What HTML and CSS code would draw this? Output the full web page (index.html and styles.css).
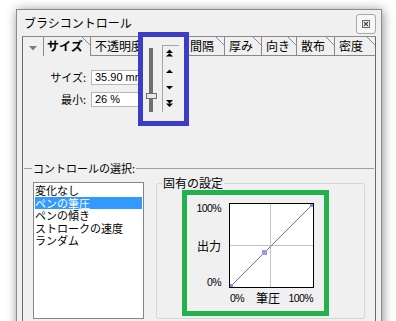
FILE: index.html
```html
<!DOCTYPE html>
<html lang="ja">
<head>
<meta charset="utf-8">
<title>ブラシコントロール</title>
<link rel="stylesheet" href="styles.css">
</head>
<body>
<div class="window">
  <div class="titlebar">
    <span class="title">ブラシコントロール</span>
    <button class="close" aria-label="閉じる">
      <svg width="8" height="8" viewBox="0 0 8 8"><rect x="0.5" y="0.5" width="7" height="7" fill="none" stroke="#6a6a6a"/><path d="M2 2L6 6M6 2L2 6" stroke="#4a4a4a" stroke-width="1.2"/></svg>
    </button>
  </div>
  <div class="panel">
    <div class="tabs">
      <div class="tab tab-menu"><svg class="menu-arrow" width="8" height="5" viewBox="0 0 8 5"><path d="M0 0H8L4 4.5Z" fill="#7c7c7c"/></svg></div>
      <div class="tab tab-active w-size">サイズ</div>
      <div class="tab w-opacity">不透明度</div>
      <div class="tab w-interval">間隔</div>
      <div class="tab w-thick">厚み</div>
      <div class="tab w-dir">向き</div>
      <div class="tab w-scatter">散布</div>
      <div class="tab tab-last w-density">密度</div>
    </div>
    <div class="body">
      <div class="fields">
        <div class="field"><span class="label">サイズ:</span><div class="input">35.90 mm</div></div>
        <div class="field"><span class="label">最小:</span><div class="input">26 %</div></div>
      </div>
      <fieldset class="ctrl">
        <legend>コントロールの選択:</legend>
        <div class="ctrl-row">
          <ul class="list">
            <li>変化なし</li>
            <li class="sel">ペンの筆圧</li>
            <li>ペンの傾き</li>
            <li>ストロークの速度</li>
            <li>ランダム</li>
          </ul>
          <fieldset class="group">
            <legend>固有の設定</legend>
            <div class="mark-green">
              <div class="chart">
                <div class="ylabels"><span>100%</span><span class="jp">出力</span><span>0%</span></div>
                <svg class="graph" width="85" height="85" viewBox="0 0 85 85">
                  <rect x="0.5" y="0.5" width="84" height="84" fill="#fff" stroke="#000"/>
                  <line x1="41.5" y1="1" x2="41.5" y2="84" stroke="#c4c4c4"/>
                  <line x1="1" y1="42.5" x2="84" y2="42.5" stroke="#c4c4c4"/>
                  <line x1="1.5" y1="83.5" x2="83.5" y2="1.5" stroke="#6a6aa6"/>
                  <rect x="1" y="81" width="3" height="3" fill="#8a8ad8"/>
                  <rect x="81" y="1" width="3" height="3" fill="#8a8ad8"/>
                  <rect x="33" y="47" width="5" height="5" fill="#9a9ae8"/>
                </svg>
                <div class="xlabels"><span>0%</span><span class="jp mid">筆圧</span><span class="last">100%</span></div>
              </div>
            </div>
          </fieldset>
        </div>
      </fieldset>
    </div>
  </div>
  <div class="popup">
    <div class="slider">
      <div class="track"></div>
      <div class="thumb"></div>
    </div>
    <div class="spinner">
      <svg width="13" height="66" viewBox="0 0 13 66">
        <path d="M3 7L6.5 3.5L10 7Z M3 10.5L6.5 7L10 10.5Z" fill="#000"/>
        <path d="M3 27L6.5 23.5L10 27Z" fill="#000"/>
        <path d="M3 40L10 40L6.5 43.5Z" fill="#000"/>
        <path d="M3 54L10 54L6.5 57.5Z M3 57.5L10 57.5L6.5 61Z" fill="#000"/>
      </svg>
    </div>
  </div>
</div>
</body>
</html>
```

FILE: styles.css
```css
* { box-sizing: border-box; }
html, body { margin: 0; padding: 0; }
body {
  background: #fff;
  font-family: "Noto Sans CJK JP", "Noto Sans", sans-serif;
  font-size: 11px;
  color: #000;
  height: 321px;
  overflow: hidden;
}
.window {
  position: relative;
  margin: 9px 0 0 16px;
  width: 366px;
  height: 330px;
  background: #f0f0f0;
  border: 1px solid #8c8c8c;
  box-shadow: 1px 1px 10px rgba(0, 0, 0, 0.45);
}
.titlebar {
  display: flex;
  align-items: center;
  justify-content: space-between;
  height: 26px;
  padding: 0 5px 0 7px;
}
.title { font-size: 12px; line-height: 14px; }
.close {
  width: 20px;
  height: 20px;
  margin-top: 2px;
  padding: 0;
  border: 1px solid #a8a8a8;
  border-radius: 3px;
  background: #f7f7f7;
  display: flex;
  align-items: center;
  justify-content: center;
}
.close svg { display: block; }

.panel { margin: 0 5px; }
.tabs {
  display: flex;
  height: 20px;
  border-top: 1px solid #8a8a8a;
}
.tab {
  position: relative;
  flex: none;
  height: 19px;
  border-left: 1px solid #8a8a8a;
  border-bottom: 1px solid #8a8a8a;
  padding-left: 4px;
  font-size: 12px;
  line-height: 18px;
  white-space: nowrap;
  overflow: hidden;
}
.tab:not(.tab-menu)::after {
  content: "";
  position: absolute;
  top: 0;
  right: 0;
  width: 8px;
  height: 8px;
  background: linear-gradient(to top right, transparent calc(50% - 0.7px), #8a8a8a 50%, transparent calc(50% + 0.7px));
}
.tab-menu {
  width: 21px;
  border-left-color: #6a6a6a;
  border-bottom: none;
  padding: 9px 0 0 6px;
}
.menu-arrow { display: block; }
.tab-active { border-bottom: none; font-weight: bold; padding-left: 3px; }
.w-size { width: 47px; }
.w-opacity { width: 95px; }
.w-interval { width: 39px; }
.w-thick { width: 37px; }
.w-dir { width: 35px; }
.w-scatter { width: 38px; }
.w-density { width: 42px; }
.tab-last { border-right: 1px solid #6a6a6a; }
.tab-last::after {
  top: -1px !important;
  right: -1px !important;
  width: 10px !important;
  height: 10px !important;
  background: linear-gradient(to bottom left, #f0f0f0 calc(50% - 0.7px), #8a8a8a 50%, transparent calc(50% + 0.7px)) !important;
}

.body {
  height: 270px;
  border-left: 1px solid #6a6a6a;
  border-right: 1px solid #6a6a6a;
  padding-top: 14px;
}
.field { display: flex; align-items: center; height: 15px; }
.field + .field { margin-top: 7px; }
.label {
  width: 63px;
  margin-right: 5px;
  text-align: right;
  font-size: 11px;
  line-height: 15px;
}
.input {
  width: 60px;
  height: 15px;
  background: #fff;
  border: 1px solid #b4b7bd;
  padding-left: 3px;
  font-family: "Liberation Sans", sans-serif;
  font-size: 11px;
  line-height: 13px;
}

.ctrl {
  margin: 54px 1px 0 1px;
  padding: 0 0 0 8px;
  border: none;
  border-top: 1px solid #a0a0a0;
  min-width: 0;
}
.ctrl > legend {
  padding: 0 1px;
  font-size: 11px;
  line-height: 14px;
}
.ctrl-row { display: flex; align-items: flex-start; }
.list {
  list-style: none;
  margin: 7px 0 0 1px;
  padding: 1px 1px 0;
  width: 111px;
  height: 137px;
  background: #fff;
  border: 1px solid #82878f;
}
.list li {
  height: 12.5px;
  line-height: 12.5px;
  font-size: 11px;
  white-space: nowrap;
}
.list li.sel { background: #3399ff; color: #fff; }

.group {
  margin: 1px 0 0 12px;
  padding: 0 0 2px 0;
  width: 209px;
  border: 1px solid #d6d6d6;
  border-radius: 3px;
  min-width: 0;
}
.group > legend {
  margin-left: 5px;
  padding: 0 1px;
  font-size: 12px;
  line-height: 14px;
}
.mark-green {
  margin-left: 25px;
  width: 147px;
  height: 126px;
  border: 5px solid #22b14c;
  padding-top: 8px;
}
.chart {
  display: grid;
  grid-template-columns: 34px 85px;
  column-gap: 8px;
}
.ylabels {
  display: flex;
  flex-direction: column;
  justify-content: space-between;
  align-items: flex-end;
  height: 85px;
  font-family: "Liberation Sans", "Noto Sans CJK JP", sans-serif;
  font-size: 10.5px;
  letter-spacing: -0.6px;
  line-height: 11px;
}
.jp { font-family: "Noto Sans CJK JP", sans-serif; font-size: 12px; letter-spacing: 0; }
.graph { display: block; }
.xlabels {
  grid-column: 2;
  display: flex;
  margin-top: 4px;
  font-family: "Liberation Sans", "Noto Sans CJK JP", sans-serif;
  font-size: 10.5px;
  letter-spacing: -0.6px;
  line-height: 12px;
}
.xlabels span:first-child { margin-left: 1px; }
.xlabels .mid { margin-left: 12px; }
.xlabels .last { margin-left: auto; margin-right: 1px; }

.popup {
  position: absolute;
  left: 121px;
  top: 22px;
  width: 51px;
  height: 94px;
  border: 5px solid #3c3cc6;
  background: #f0f0f0;
  display: flex;
}
.slider { position: relative; width: 19px; flex: none; }
.track {
  width: 4px;
  height: 64px;
  margin: 11px 0 0 6px;
  background: #707070;
}
.thumb {
  position: absolute;
  left: 3px;
  top: 56px;
  width: 11px;
  height: 6px;
  border: 1px solid #6a6a6a;
  background: #e8e8e8;
}
.spinner {
  flex: none;
  margin-top: 8px;
  width: 17px;
  height: 67px;
  border-top: 1px solid #a6a6a6;
  border-left: 1px solid #a6a6a6;
}
.spinner svg { display: block; }
```
